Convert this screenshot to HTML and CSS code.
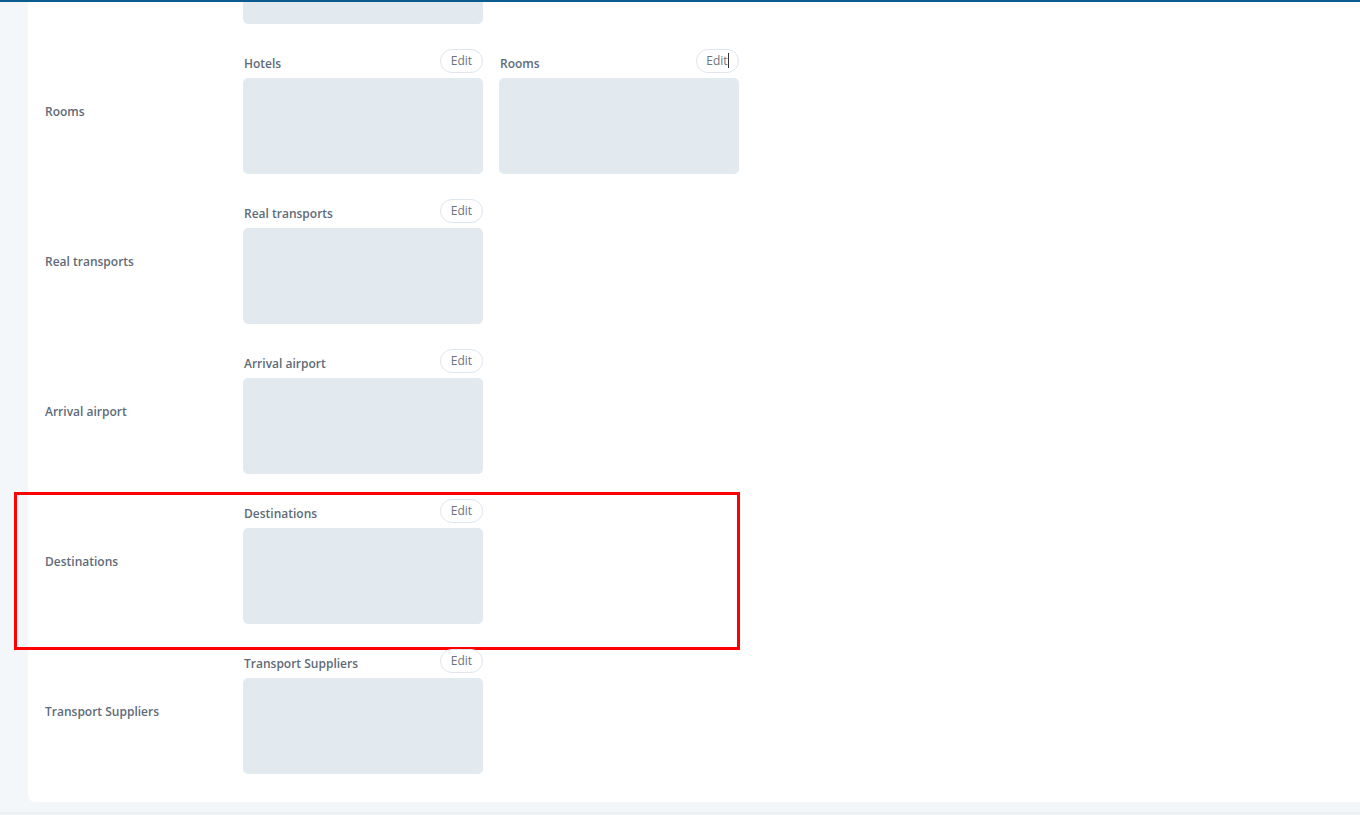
FILE: index.html
```html
<!DOCTYPE html>
<html>
<head>
<meta charset="utf-8">
<link rel="stylesheet" href="styles.css">
</head>
<body>
<div class="topbar"></div>
<div class="page">
  <div class="card">
    <div class="row row-partial">
      <div class="row-label"></div>
      <div class="groups">
        <div class="group"><div class="box"></div></div>
      </div>
    </div>
    <div class="row">
      <div class="row-label">Rooms</div>
      <div class="groups">
        <div class="group">
          <div class="group-head"><span class="group-title">Hotels</span><button class="edit">Edit</button></div>
          <div class="box"></div>
        </div>
        <div class="group">
          <div class="group-head"><span class="group-title">Rooms</span><button class="edit">Edit<span class="caret"></span></button></div>
          <div class="box"></div>
        </div>
      </div>
    </div>
    <div class="row">
      <div class="row-label">Real transports</div>
      <div class="groups">
        <div class="group">
          <div class="group-head"><span class="group-title">Real transports</span><button class="edit">Edit</button></div>
          <div class="box"></div>
        </div>
      </div>
    </div>
    <div class="row">
      <div class="row-label">Arrival airport</div>
      <div class="groups">
        <div class="group">
          <div class="group-head"><span class="group-title">Arrival airport</span><button class="edit">Edit</button></div>
          <div class="box"></div>
        </div>
      </div>
    </div>
    <div class="row row-highlighted">
      <div class="row-label">Destinations</div>
      <div class="groups">
        <div class="group">
          <div class="group-head"><span class="group-title">Destinations</span><button class="edit">Edit</button></div>
          <div class="box"></div>
        </div>
      </div>
      <div class="highlight"></div>
    </div>
    <div class="row">
      <div class="row-label">Transport Suppliers</div>
      <div class="groups">
        <div class="group">
          <div class="group-head"><span class="group-title">Transport Suppliers</span><button class="edit">Edit</button></div>
          <div class="box"></div>
        </div>
      </div>
    </div>
  </div>
</div>
<div class="scrolltrack"></div>
</body>
</html>
```
FILE: styles.css
```css
* { box-sizing: border-box; }
html, body {
  margin: 0;
  padding: 0;
  height: 815px;
  overflow: hidden;
  background: #f4f7fa;
  font-family: "Open Sans", "Noto Sans", sans-serif;
  color: #606b78;
}
.topbar {
  height: 2px;
  background: #0c5b8e;
}
.page {
  height: 810px;
  padding-left: 28px;
  overflow: hidden;
}
.card {
  background: #ffffff;
  margin-top: -116px;
  padding-bottom: 16px;
  border-bottom-left-radius: 7px;
}
.row {
  position: relative;
  display: grid;
  grid-template-columns: 215px 1fr;
  height: 150px;
  padding: 13px 0 12px;
}
.row-label {
  align-self: center;
  padding-left: 17px;
  font-size: 12px;
  font-weight: 600;
  color: #606b78;
}
.groups {
  display: flex;
  gap: 16px;
}
.group {
  width: 240px;
  display: flex;
  flex-direction: column;
}
.row-partial .group { justify-content: flex-end; }
.group-head {
  height: 24px;
  display: flex;
  justify-content: space-between;
  align-items: center;
  margin-bottom: 5px;
}
.group-title {
  font-size: 12px;
  font-weight: 600;
  color: #606b78;
  padding-left: 1px;
  padding-top: 4px;
}
.edit {
  height: 24px;
  width: 43px;
  padding: 0;
  border: 1px solid #dde6ee;
  border-radius: 12px;
  background: #ffffff;
  font-family: "Open Sans", "Noto Sans", sans-serif;
  font-size: 12px;
  color: #6b7582;
  line-height: 20px;
  position: relative;
}
.caret {
  display: inline-block;
  width: 1px;
  height: 15px;
  background: #333;
  vertical-align: -3px;
}
.box {
  height: 96px;
  background: #e2eaf0;
  border-radius: 5px;
}
.highlight {
  position: absolute;
  top: 6px;
  left: -14px;
  width: 726px;
  height: 158px;
  border: 3px solid #ff0000;
  pointer-events: none;
}
.scrolltrack {
  height: 3px;
  background: #eef1f4;
}
```
